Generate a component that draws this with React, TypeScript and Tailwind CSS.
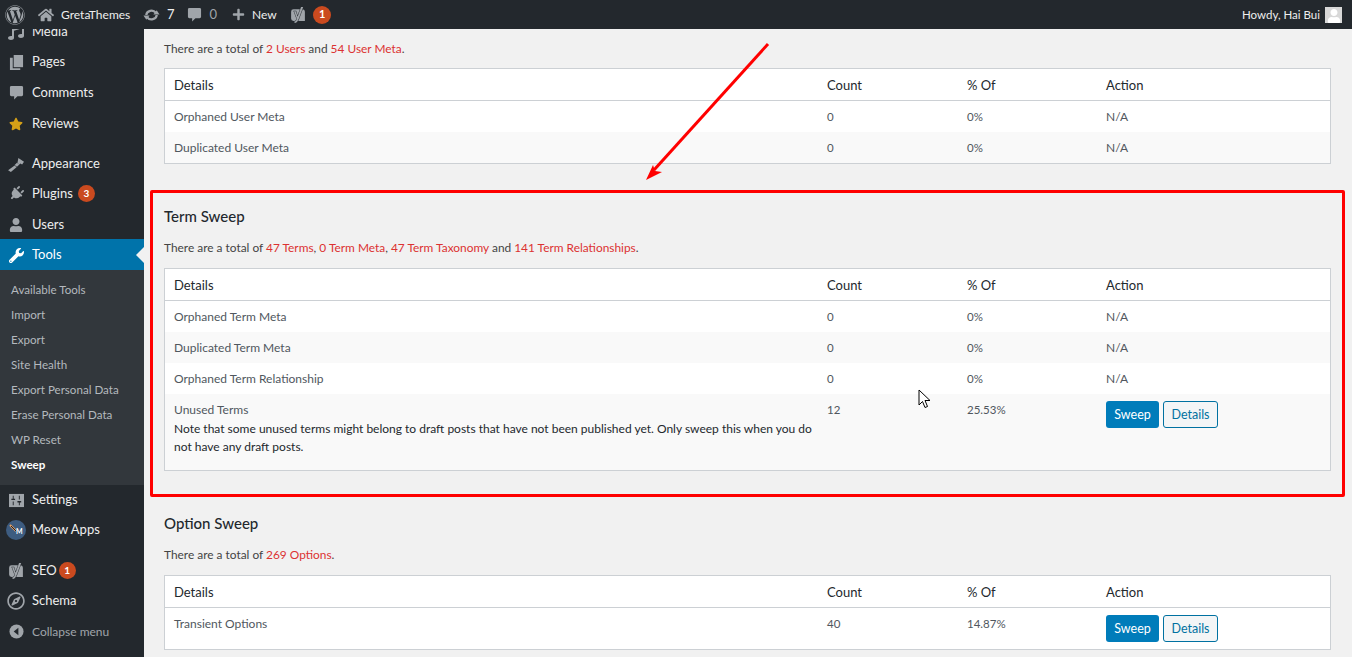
import React from "react";
import { FaWordpress, FaHome, FaPlus, FaStar, FaPlug, FaUser, FaWrench, FaRegCompass, FaMusic } from "react-icons/fa";
import { SiYoast } from "react-icons/si";

const font = "font-['Lato',sans-serif]";

const Badge = ({ n, className = "" }: { n: number; className?: string }) => (
  <span className={`flex h-[17px] w-[17px] items-center justify-center rounded-full bg-[#ca4a1f] text-[10px] font-bold text-white ${className}`}>
    {n}
  </span>
);

// dashicons look-alikes
const CommentIcon = ({ size = 15 }: { size?: number }) => (
  <svg viewBox="0 0 16 16" width={size} height={size} fill="currentColor">
    <path d="M2.500 1h11A1.500 1.500 0 0 1 15 2.500v8a1.500 1.500 0 0 1-1.500 1.500H9l-3.500 3.500V12h-3A1.500 1.500 0 0 1 1 10.500v-8A1.500 1.500 0 0 1 2.500 1z" />
  </svg>
);

const UpdateIcon = () => (
  <svg viewBox="0 0 18 14" width="17" height="14" fill="none" stroke="currentColor" strokeWidth="2.400">
    <path d="M3.500 7a5.500 5 0 0 1 10-2.500" />
    <path d="M14.500 7a5.500 5 0 0 1-10 2.500" />
    <path d="M11 6.500h6.500L14.500 2z" fill="currentColor" stroke="none" />
    <path d="M7 7.500H.5L3.500 12z" fill="currentColor" stroke="none" />
  </svg>
);

const PagesIcon = () => (
  <svg viewBox="0 0 16 16" width="15" height="15" fill="currentColor">
    <path d="M5 0h10v13H5z" />
    <path d="M1 3h3v11h8v2H1z" />
  </svg>
);

const BrushIcon = () => (
  <svg viewBox="0 0 18 16" width="17" height="15" fill="currentColor">
    <path d="M11 1l6 4-2 3-2-1-1 1-2-1.500z" />
    <path d="M9.500 6l2.500 2-2.500 2.500L7 8.500z" />
    <path d="M7 9l2 2-6 5-3-2z" />
  </svg>
);

const SettingsIcon = () => (
  <svg viewBox="0 0 16 16" className="h-[15px] w-[15px]">
    <path fill="#a0a5aa" d="M0 1h16v14H0z" />
    <path fill="#23282d" d="M4 3h1v3h1.500v1.500h-4V6H4zM4 9h1v4H4zM10.500 3h1v4h-1zM9 8.500h4V10h-1.500v3h-1v-3H9z" />
  </svg>
);

const MeowIcon = () => (
  <span className="flex h-5 w-5 items-center justify-center rounded-full bg-[#3d5c80]">
    <svg viewBox="0 0 20 20" className="h-5 w-5">
      <path d="M4 5l6 6" stroke="#e8a060" strokeWidth="2" />
      <path d="M5 6l5 5" stroke="#222" strokeWidth="1" />
      <text x="10" y="14" fontSize="7" fontWeight="700" fill="#fff" fontFamily="Lato">M</text>
    </svg>
  </span>
);

const CollapseIcon = () => (
  <svg viewBox="0 0 16 16" className="h-[15px] w-[15px]">
    <circle cx="8" cy="8" r="7.500" fill="#a0a5aa" />
    <path fill="#23282d" d="M10 4v8L5 8z" />
  </svg>
);

const topMenu = [
  { label: "Media", icon: <FaMusic size={16} />, h: "h-[31px]" },
  { label: "Pages", icon: <PagesIcon />, h: "h-[30px]" },
  { label: "Comments", icon: <CommentIcon />, h: "h-[31px]" },
  { label: "Reviews", icon: <FaStar size={14} className="text-[#d4a017]" />, h: "h-[31px]" },
];

const MenuRow = ({ label, icon, h, badge, badgeMl = "ml-[5px]", active }: { label: string; icon: React.ReactNode; h: string; badge?: number; badgeMl?: string; active?: boolean }) => (
  <div className={`relative flex items-center ${h} ${active ? "bg-[#0073aa] text-white" : "text-[#eeeeee]"}`}>
    <span className={`flex w-[32px] justify-center ${active ? "text-white" : "text-[#a0a5aa]"}`}>{icon}</span>
    <span className="text-[13px]">{label}</span>
    {badge !== undefined && <Badge n={badge} className={badgeMl} />}
    {active && <span className="absolute right-0 top-1/2 h-0 w-0 -translate-y-1/2 border-y-[8px] border-r-[8px] border-y-transparent border-r-[#f1f1f1]" />}
  </div>
);

const subItems = ["Available Tools", "Import", "Export", "Site Health", "Export Personal Data", "Erase Personal Data", "WP Reset"];

const Sidebar = () => (
  <aside className="h-full w-[144px] shrink-0 overflow-hidden bg-[#23282d]">
    <div className="mt-[-13px]">
      {topMenu.map((m) => (
        <MenuRow key={m.label} {...m} />
      ))}
      <div className="h-[9px]" />
      <MenuRow label="Appearance" icon={<BrushIcon />} h="h-[30px] pt-[2px]" />
      <MenuRow label="Plugins" icon={<FaPlug size={15} className="rotate-45" />} h="h-[31px]" badge={3} />
      <MenuRow label="Users" icon={<FaUser size={14} />} h="h-[30px] pt-[2px]" />
      <MenuRow label="Tools" icon={<FaWrench size={15} />} h="h-[31px] pt-[1px]" active />
      <div className="bg-[#32373c] pb-[8px] pt-[7px] text-[11.6px] text-[#b4b9be]">
        {subItems.map((s) => (
          <div key={s} className="flex h-[25px] items-center pl-[11px]">
            {s}
          </div>
        ))}
        <div className="flex h-[25px] items-center pl-[11px] font-bold text-white">Sweep</div>
      </div>
      <MenuRow label="Settings" icon={<SettingsIcon />} h="h-[30px]" />
      <MenuRow label="Meow Apps" icon={<MeowIcon />} h="h-[30px]" />
      <div className="h-[10px]" />
      <MenuRow label="SEO" icon={<SiYoast size={16} />} h="h-[31px]" badge={1} badgeMl="ml-[2px]" />
      <MenuRow label="Schema" icon={<FaRegCompass size={18} />} h="h-[30px]" />
      <div className="flex h-[31px] items-center text-[12px] text-[#a0a5aa]">
        <span className="flex w-[32px] justify-center">
          <CollapseIcon />
        </span>
        Collapse menu
      </div>
    </div>
  </aside>
);

const AdminBar = () => (
  <header className="flex h-[29px] shrink-0 items-center justify-between bg-[#23282d] pr-[10px] text-[12px] text-[#eeeeee]">
    <div className="flex items-center">
      <FaWordpress size={20} className="ml-[5px] text-[#a0a5aa]" />
      <FaHome size={16} className="ml-[13px] text-[#a0a5aa]" />
      <span className="ml-[7px] w-[68px]">GretaThemes</span>
      <span className="ml-[14px] text-[#a0a5aa]">
        <UpdateIcon />
      </span>
      <span className="ml-[7px] text-[13px]">7</span>
      <span className="ml-[12px] text-[#a0a5aa]">
        <CommentIcon size={15} />
      </span>
      <span className="ml-[8px] text-[13px] text-[#a0a5aa]">0</span>
      <FaPlus size={13} className="ml-[15px] text-[#a0a5aa]" />
      <span className="ml-[7px] w-[24px]">New</span>
      <SiYoast size={16} className="ml-[14px] text-[#a0a5aa]" />
      <Badge n={1} className="ml-[7px] !h-[18px] !w-[18px] !text-[11px]" />
    </div>
    <div className="flex items-center">
      <span className="text-[11.500px]">Howdy, Hai Bui</span>
      <span className="ml-[5px] flex h-[16px] w-[17px] items-end justify-center overflow-hidden bg-[#d8d8d8]">
        <FaUser size={14} className="text-white" />
      </span>
    </div>
  </header>
);

const Red = ({ children }: { children: React.ReactNode }) => <span className="text-[#dc3232]">{children}</span>;

const Sweep = () => (
  <div className="flex gap-[4px]">
    <button className="h-[27px] w-[53px] rounded-[3px] bg-[#007cba] pt-[1px] text-[12.500px] text-white">Sweep</button>
    <button className="h-[27px] w-[55px] rounded-[3px] border border-[#0071a1] bg-[#f3f5f6] pt-[1px] text-[12.500px] text-[#0071a1]">Details</button>
  </div>
);

type Row = { name: string; count: string; pct: string; note?: string; action?: boolean };

const SweepTable = ({ rows }: { rows: Row[] }) => (
  <div className="border border-[#ccd0d4] bg-white text-[12px] text-[#50575e]">
    <div className="grid h-[32px] grid-cols-[653px_140px_139px_1fr] items-center border-b border-[#ccd0d4] pl-[9px] pt-[2px] text-[13px] text-[#23282d]">
      <span>Details</span>
      <span>Count</span>
      <span>% Of</span>
      <span>Action</span>
    </div>
    {rows.map((r, i) => (
      <div
        key={r.name}
        className={`grid grid-cols-[653px_140px_139px_1fr] pl-[9px] ${i % 2 === 1 ? "bg-[#f9f9f9]" : "bg-white"} ${r.note ? "h-[76px] pt-[7px]" : r.action ? "h-[41px] pt-[7px]" : "h-[31px] items-center"}`}
      >
        <div className="pr-[10px]">
          <span>{r.name}</span>
          {r.note && <p className="mt-[1px] text-[12px] leading-[18px] text-[#23282d]">{r.note}</p>}
        </div>
        <span className="text-[11.500px]">{r.count}</span>
        <span className="text-[11.500px]">{r.pct}</span>
        <div>{r.action ? <Sweep /> : "N/A"}</div>
      </div>
    ))}
  </div>
);

const Summary = ({ children }: { children: React.ReactNode }) => <p className="text-[11.900px] leading-[18px] text-[#444444]">{children}</p>;
const Title = ({ children }: { children: React.ReactNode }) => <h2 className="text-[15px] font-medium leading-[20px] text-[#23282d]">{children}</h2>;

const Overlays = () => (
  <>
    <div className="pointer-events-none absolute left-[150px] top-[190px] h-[307px] w-[1195px] rounded-[2px] border-[3px] border-[#ff0000]" />
    <svg className="pointer-events-none absolute left-0 top-0 h-[657px] w-[1352px]">
      <path d="M768 44L654 170" stroke="#ff0000" strokeWidth="3" />
      <path d="M646 180l7-15 2 6 7 1z" fill="#ff0000" />
    </svg>
    <svg className="pointer-events-none absolute left-[918px] top-[389px] h-[20px] w-[14px]" viewBox="0 0 14 20">
      <path d="M1 1v15l3.500-3.500 2.500 6 2.500-1-2.500-6H12z" fill="#fff" stroke="#000" strokeWidth="1" />
    </svg>
  </>
);

export default function App() {
  return (
    <div className={`relative flex h-[657px] w-[1352px] flex-col overflow-hidden bg-[#f1f1f1] ${font}`}>
      <AdminBar />
      <div className="flex min-h-0 flex-1">
        <Sidebar />
        <main className="min-w-0 flex-1 pl-[20px] pr-[21px] pt-[11px]">
          <Summary>
            There are a total of <Red>2 Users</Red> and <Red>54 User Meta</Red>.
          </Summary>
          <div className="mt-[10px]">
            <SweepTable
              rows={[
                { name: "Orphaned User Meta", count: "0", pct: "0%" },
                { name: "Duplicated User Meta", count: "0", pct: "0%" },
              ]}
            />
          </div>
          <div className="mt-[42px]">
            <Title>Term Sweep</Title>
          </div>
          <div className="mt-[13px]">
            <Summary>
              There are a total of <Red>47 Terms</Red>, <Red>0 Term Meta</Red>, <Red>47 Term Taxonomy</Red> and <Red>141 Term Relationships</Red>.
            </Summary>
          </div>
          <div className="mt-[11px]">
            <SweepTable
              rows={[
                { name: "Orphaned Term Meta", count: "0", pct: "0%" },
                { name: "Duplicated Term Meta", count: "0", pct: "0%" },
                { name: "Orphaned Term Relationship", count: "0", pct: "0%" },
                {
                  name: "Unused Terms",
                  count: "12",
                  pct: "25.53%",
                  action: true,
                  note: "Note that some unused terms might belong to draft posts that have not been published yet. Only sweep this when you do not have any draft posts.",
                },
              ]}
            />
          </div>
          <div className="mt-[42px]">
            <Title>Option Sweep</Title>
          </div>
          <div className="mt-[13px]">
            <Summary>
              There are a total of <Red>269 Options</Red>.
            </Summary>
          </div>
          <div className="mt-[11px]">
            <SweepTable rows={[{ name: "Transient Options", count: "40", pct: "14.87%", action: true }]} />
          </div>
        </main>
      </div>
      <Overlays />
    </div>
  );
}
